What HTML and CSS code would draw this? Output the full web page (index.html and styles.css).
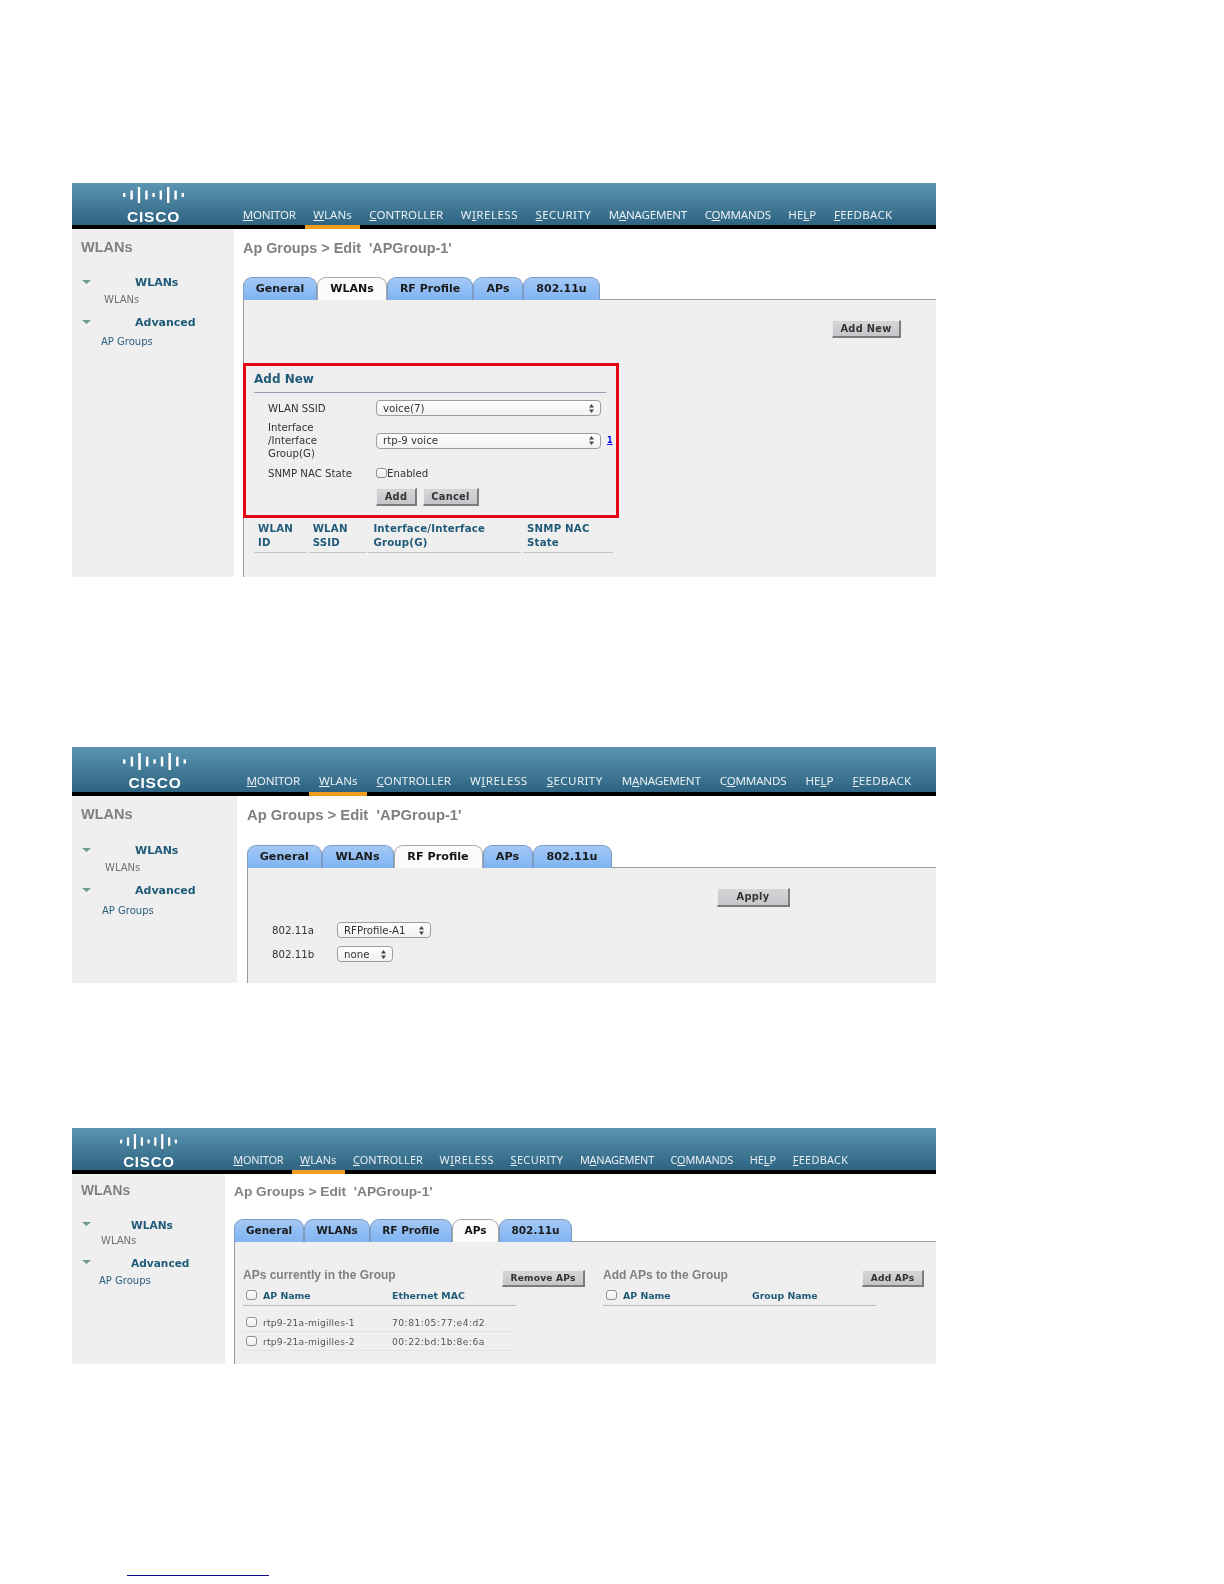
FILE: index.html
```
<!DOCTYPE html>
<html lang="en">
<head>
<meta charset="utf-8">
<title>AP Groups</title>
<link rel="stylesheet" href="styles.css">
</head>
<body>
<main class="page">

<section class="shot shot-a">
  <header class="bar">
    <div class="brand">
      <svg class="logo" viewBox="0 0 61 16" preserveAspectRatio="none"><g fill="#fff"><rect x="0" y="6" width="2.4" height="4"/><rect x="7.4" y="3.5" width="2.4" height="9"/><rect x="14.8" y="0" width="2.4" height="16"/><rect x="22.2" y="3.5" width="2.4" height="9"/><rect x="29.4" y="6" width="2.4" height="4"/><rect x="36.6" y="3.5" width="2.4" height="9"/><rect x="44" y="0" width="2.4" height="16"/><rect x="51.4" y="3.5" width="2.4" height="9"/><rect x="58.6" y="6" width="2.4" height="4"/></g></svg>
      <span class="cisco">CISCO</span>
    </div>
    <nav class="nav">
      <a><u>M</u>ONITOR</a><a class="on"><u>W</u>LANs</a><a><u>C</u>ONTROLLER</a><a>W<u>I</u>RELESS</a><a><u>S</u>ECURITY</a><a>M<u>A</u>NAGEMENT</a><a>C<u>O</u>MMANDS</a><a>HE<u>L</u>P</a><a><u>F</u>EEDBACK</a>
    </nav>
  </header>
  <div class="body">
    <aside class="side">
      <h2 class="side-title">WLANs</h2>
      <div class="side-head r1"><svg class="tri" viewBox="0 0 9 4"><polygon points="0,0 9,0 4.5,4"/></svg><b>WLANs</b></div>
      <div class="side-sub r2">WLANs</div>
      <div class="side-head r3"><svg class="tri" viewBox="0 0 9 4"><polygon points="0,0 9,0 4.5,4"/></svg><b>Advanced</b></div>
      <div class="side-link r4">AP Groups</div>
    </aside>
    <div class="main">
      <h1 class="title">Ap Groups &gt; Edit&nbsp; 'APGroup-1'</h1>
      <div class="tabs">
        <span class="tab t1">General</span><span class="tab t2 active">WLANs</span><span class="tab t3">RF Profile</span><span class="tab t4">APs</span><span class="tab t5">802.11u</span>
      </div>
      <div class="panel panel-a">
        <div class="addnew-row"><button class="btn btn-new">Add New</button></div>
        <div class="redbox">
          <h3 class="form-title">Add New</h3>
          <div class="form-grid">
            <span class="lab">WLAN SSID</span>
            <div class="sel sel-wide"><span>voice(7)</span><svg class="updown" viewBox="0 0 5 9"><path d="M2.5 0 5 3.4H0zM2.5 9 0 5.6h5z"/></svg></div>
            <span></span>
            <span class="lab">Interface<br>/Interface<br>Group(G)</span>
            <div class="sel sel-wide"><span>rtp-9 voice</span><svg class="updown" viewBox="0 0 5 9"><path d="M2.5 0 5 3.4H0zM2.5 9 0 5.6h5z"/></svg></div>
            <a class="foot">1</a>
            <span class="lab">SNMP NAC State</span>
            <label class="check-line"><input type="checkbox" class="cb"><span>Enabled</span></label>
            <span></span>
            <span></span>
            <div class="form-btns"><button class="btn btn-add">Add</button><button class="btn btn-cancel">Cancel</button></div>
          </div>
        </div>
        <div class="wtable">
          <div class="wth">WLAN<br>ID</div>
          <div class="wth">WLAN<br>SSID</div>
          <div class="wth">Interface/Interface<br>Group(G)</div>
          <div class="wth">SNMP NAC<br>State</div>
        </div>
      </div>
    </div>
  </div>
</section>

<section class="shot shot-b">
  <header class="bar">
    <div class="brand">
      <svg class="logo" viewBox="0 0 61 16" preserveAspectRatio="none"><g fill="#fff"><rect x="0" y="6" width="2.4" height="4"/><rect x="7.4" y="3.5" width="2.4" height="9"/><rect x="14.8" y="0" width="2.4" height="16"/><rect x="22.2" y="3.5" width="2.4" height="9"/><rect x="29.4" y="6" width="2.4" height="4"/><rect x="36.6" y="3.5" width="2.4" height="9"/><rect x="44" y="0" width="2.4" height="16"/><rect x="51.4" y="3.5" width="2.4" height="9"/><rect x="58.6" y="6" width="2.4" height="4"/></g></svg>
      <span class="cisco">CISCO</span>
    </div>
    <nav class="nav">
      <a><u>M</u>ONITOR</a><a class="on"><u>W</u>LANs</a><a><u>C</u>ONTROLLER</a><a>W<u>I</u>RELESS</a><a><u>S</u>ECURITY</a><a>M<u>A</u>NAGEMENT</a><a>C<u>O</u>MMANDS</a><a>HE<u>L</u>P</a><a><u>F</u>EEDBACK</a>
    </nav>
  </header>
  <div class="body">
    <aside class="side">
      <h2 class="side-title">WLANs</h2>
      <div class="side-head r1"><svg class="tri" viewBox="0 0 9 4"><polygon points="0,0 9,0 4.5,4"/></svg><b>WLANs</b></div>
      <div class="side-sub r2">WLANs</div>
      <div class="side-head r3"><svg class="tri" viewBox="0 0 9 4"><polygon points="0,0 9,0 4.5,4"/></svg><b>Advanced</b></div>
      <div class="side-link r4">AP Groups</div>
    </aside>
    <div class="main">
      <h1 class="title">Ap Groups &gt; Edit&nbsp; 'APGroup-1'</h1>
      <div class="tabs">
        <span class="tab t1">General</span><span class="tab t2">WLANs</span><span class="tab t3 active">RF Profile</span><span class="tab t4">APs</span><span class="tab t5">802.11u</span>
      </div>
      <div class="panel panel-b">
        <button class="btn btn-apply">Apply</button>
        <div class="rf-grid">
          <span class="lab">802.11a</span>
          <div class="sel sel-rf"><span>RFProfile-A1</span><svg class="updown" viewBox="0 0 5 9"><path d="M2.5 0 5 3.4H0zM2.5 9 0 5.6h5z"/></svg></div>
          <span class="lab">802.11b</span>
          <div class="sel sel-none"><span>none</span><svg class="updown" viewBox="0 0 5 9"><path d="M2.5 0 5 3.4H0zM2.5 9 0 5.6h5z"/></svg></div>
        </div>
      </div>
    </div>
  </div>
</section>

<section class="shot shot-c">
  <header class="bar">
    <div class="brand">
      <svg class="logo" viewBox="0 0 61 16" preserveAspectRatio="none"><g fill="#fff"><rect x="0" y="6" width="2.4" height="4"/><rect x="7.4" y="3.5" width="2.4" height="9"/><rect x="14.8" y="0" width="2.4" height="16"/><rect x="22.2" y="3.5" width="2.4" height="9"/><rect x="29.4" y="6" width="2.4" height="4"/><rect x="36.6" y="3.5" width="2.4" height="9"/><rect x="44" y="0" width="2.4" height="16"/><rect x="51.4" y="3.5" width="2.4" height="9"/><rect x="58.6" y="6" width="2.4" height="4"/></g></svg>
      <span class="cisco">CISCO</span>
    </div>
    <nav class="nav">
      <a><u>M</u>ONITOR</a><a class="on"><u>W</u>LANs</a><a><u>C</u>ONTROLLER</a><a>W<u>I</u>RELESS</a><a><u>S</u>ECURITY</a><a>M<u>A</u>NAGEMENT</a><a>C<u>O</u>MMANDS</a><a>HE<u>L</u>P</a><a><u>F</u>EEDBACK</a>
    </nav>
  </header>
  <div class="body">
    <aside class="side">
      <h2 class="side-title">WLANs</h2>
      <div class="side-head r1"><svg class="tri" viewBox="0 0 9 4"><polygon points="0,0 9,0 4.5,4"/></svg><b>WLANs</b></div>
      <div class="side-sub r2">WLANs</div>
      <div class="side-head r3"><svg class="tri" viewBox="0 0 9 4"><polygon points="0,0 9,0 4.5,4"/></svg><b>Advanced</b></div>
      <div class="side-link r4">AP Groups</div>
    </aside>
    <div class="main">
      <h1 class="title">Ap Groups &gt; Edit&nbsp; 'APGroup-1'</h1>
      <div class="tabs">
        <span class="tab t1">General</span><span class="tab t2">WLANs</span><span class="tab t3">RF Profile</span><span class="tab t4 active">APs</span><span class="tab t5">802.11u</span>
      </div>
      <div class="panel panel-c">
        <div class="ap-col ap-left">
          <div class="ap-head"><span class="ap-title">APs currently in the Group</span><button class="btn btn-remove">Remove APs</button></div>
          <div class="ap-row ap-th"><input type="checkbox" class="cb"><span>AP Name</span><span>Ethernet MAC</span></div>
          <div class="ap-row ap-td first"><input type="checkbox" class="cb"><span>rtp9-21a-migilles-1</span><span class="mac">70:81:05:77:e4:d2</span></div>
          <div class="ap-row ap-td"><input type="checkbox" class="cb"><span>rtp9-21a-migilles-2</span><span class="mac">00:22:bd:1b:8e:6a</span></div>
        </div>
        <div class="ap-col ap-right">
          <div class="ap-head"><span class="ap-title">Add APs to the Group</span><button class="btn btn-addaps">Add APs</button></div>
          <div class="ap-row ap-th"><input type="checkbox" class="cb"><span>AP Name</span><span>Group Name</span></div>
        </div>
      </div>
    </div>
  </div>
</section>

<div class="footer-line"></div>
</main>
</body>
</html>
```
FILE: styles.css
```
* { box-sizing: border-box; }
html, body { margin: 0; padding: 0; background: #fff; }
body { height: 1584px; overflow: hidden; font-family: "DejaVu Sans", sans-serif; color: #333; }
.page { padding-top: 183px; }

.shot {
  width: 864px;
  margin-left: 72px;
  display: flex;
  flex-direction: column;
  filter: blur(0.4px);
}
.shot-a { height: 394px; --side: 162px; --bar: 46px; --pad: 9px; --nav: 11.5px; --navpad: 8.8px; --navbottom: 3px; --logow: 61px; --logoh: 16px; --logotop: 4px; --logogap: 8px; --cisco: 15.5px;
  --sidetop: 9px; --sidetitle: 14.5px; --sidehead: 11px; --g1: 19px; --g2: 1px; --g3: 7px; --g4: 3px; --head: 44px; --sub: 32px; --link: 29px;
  --title: 14.4px; --titletop: 9px; --tabsgap: 19px; --tab: 11px; }
.shot-b { height: 236px; margin-top: 170px; --side: 165px; --bar: 49px; --pad: 10px; --nav: 11.6px; --navpad: 9.5px; --navbottom: 4px; --logow: 63px; --logoh: 17px; --logotop: 6px; --logogap: 7px; --cisco: 15.5px;
  --sidetop: 9px; --sidetitle: 14.5px; --sidehead: 11px; --g1: 20px; --g2: 1px; --g3: 7px; --g4: 4px; --head: 44px; --sub: 33px; --link: 30px;
  --title: 14.8px; --titletop: 9px; --tabsgap: 20px; --tab: 11.2px; }
.shot-c { height: 236px; margin-top: 145px; --side: 153px; --bar: 46px; --pad: 9px; --nav: 10.9px; --navpad: 8.3px; --navbottom: 3px; --logow: 57px; --logoh: 15px; --logotop: 6px; --logogap: 7px; --cisco: 15px;
  --sidetop: 8px; --sidetitle: 13.8px; --sidehead: 10.6px; --g1: 17px; --g2: 0px; --g3: 6px; --g4: 2px; --head: 40px; --sub: 29px; --link: 27px;
  --title: 13.7px; --titletop: 8px; --tabsgap: 17px; --tab: 10.5px; }

/* top bar */
.bar {
  flex: none;
  height: var(--bar);
  display: flex;
  background: linear-gradient(#5a94b0, #2e6481);
  border-bottom: 4px solid #000;
}
.brand {
  flex: none;
  width: var(--side);
  display: flex;
  flex-direction: column;
  align-items: center;
  padding-top: var(--logotop);
}
.logo { display: block; width: var(--logow); height: var(--logoh); }
.cisco {
  margin-top: var(--logogap);
  padding-left: 1px;
  font: bold var(--cisco)/11px "Liberation Sans", sans-serif;
  letter-spacing: .8px;
  color: #fff;
}
.nav { display: flex; align-items: flex-end; font-family: "Noto Sans", sans-serif; font-size: var(--nav); line-height: 14px; }
.nav a { padding: 0 var(--navpad) var(--navbottom); color: #e9eff3; white-space: nowrap; position: relative; }
.nav a:nth-child(1) { letter-spacing: -.2px; }
.nav a:nth-child(3) { letter-spacing: .1px; }
.nav a:nth-child(4) { letter-spacing: .5px; }
.nav a:nth-child(5) { letter-spacing: .4px; }
.nav a:nth-child(6) { letter-spacing: -.2px; }
.nav a:nth-child(7) { letter-spacing: -.2px; }
.nav a:nth-child(9) { letter-spacing: .3px; }
.nav a.on::after { content: ""; position: absolute; left: 0; right: 0; bottom: -4px; height: 4px; background: #ef9d1f; }

/* body */
.body { flex: 1; display: flex; min-height: 0; }
.side { flex: none; width: var(--side); background: #efefef; padding-top: var(--sidetop); }
.side-title { margin: 0 0 0 9px; font: bold var(--sidetitle)/18px "Liberation Sans", sans-serif; color: #808080; }
.side-head { display: flex; align-items: center; padding-left: 10px; height: 16px; font-size: var(--sidehead); line-height: 16px; color: #1f5a78; }
.side-head b { margin-left: var(--head); }
.tri { width: 9px; height: 4px; fill: #6f9a90; margin-top: -2px; }
.side-sub { padding-left: var(--sub); height: 16px; font-size: 10px; line-height: 16px; color: #707070; }
.side-link { padding-left: var(--link); height: 16px; font-size: 10px; line-height: 16px; color: #2c6080; }
.r1 { margin-top: var(--g1); }
.r2 { margin-top: var(--g2); }
.r3 { margin-top: var(--g3); }
.r4 { margin-top: var(--g4); }

.main { flex: 1; min-width: 0; padding: var(--titletop) 0 0 var(--pad); display: flex; flex-direction: column; }
.title { margin: 0; font: bold var(--title)/20px "Liberation Sans", sans-serif; color: #808080; white-space: nowrap; }

.tabs { flex: none; display: flex; height: 23px; margin-top: var(--tabsgap); position: relative; z-index: 1; margin-bottom: -1px; }
.tab {
  display: block;
  height: 23px;
  font-size: var(--tab);
  font-weight: bold;
  line-height: 21px;
  text-align: center;
  color: #1b1b1b;
  background: linear-gradient(#a3c8f5, #80b4f3);
  border: 1px solid #7e9cc0;
  border-bottom: 0;
  border-radius: 9px 9px 0 0;
}
.tab.active { background: #fbfbfb; border: 1px solid #a5a5a5; border-bottom: 0; color: #111; }
.shot-a .t1 { width: 74px; } .shot-a .t2 { width: 70px; } .shot-a .t3 { width: 86px; } .shot-a .t4 { width: 50px; } .shot-a .t5 { width: 77px; }
.shot-b .t1 { width: 74.5px; } .shot-b .t2 { width: 72px; } .shot-b .t3 { width: 89px; } .shot-b .t4 { width: 50px; } .shot-b .t5 { width: 79px; }
.shot-c .t1 { width: 70px; } .shot-c .t2 { width: 66px; } .shot-c .t3 { width: 82px; } .shot-c .t4 { width: 47px; } .shot-c .t5 { width: 73px; }

.panel { flex: 1; background: #efefef; border-top: 1px solid #999; border-left: 1px solid #999; min-height: 0; }

.btn {
  display: block;
  padding: 0;
  height: 18px;
  font: bold 9.8px/14px "DejaVu Sans", sans-serif;
  letter-spacing: .3px;
  color: #333;
  background: linear-gradient(#d6d6d9, #c6c6ca);
  border: 1px solid;
  border-color: #ededed #7c7c7c #7c7c7c #ededed;
  border-width: 1px 2px 2px 1px;
}

/* shot a */
.addnew-row { display: flex; justify-content: flex-end; padding: 20px 35px 0 0; }
.btn-new { width: 69px; }
.redbox { width: 376px; height: 155px; margin: 25px 0 0 -1px; border: 3px solid #e30613; padding: 5px 0 0 8px; }
.form-title { margin: 0; width: 352px; height: 22px; font-size: 12px; font-weight: bold; line-height: 16px; color: #1f5a78; border-bottom: 1px solid #9a9ab0; }
.form-grid { margin-top: 7px; padding-left: 14px; display: grid; grid-template-columns: 108px 225px auto; grid-template-rows: 16px 39px 16px 20px; row-gap: 5px; align-items: center; }
.lab { font-size: 10.2px; line-height: 13px; color: #333; }
.sel {
  height: 16px;
  display: flex;
  align-items: center;
  justify-content: space-between;
  padding: 0 6px;
  font-size: 10.2px;
  color: #333;
  background: linear-gradient(#fff, #f1f1f1);
  border: 1px solid #9d9d9d;
  border-radius: 4px;
}
.updown { flex: none; width: 5px; height: 9px; fill: #444; }
.foot { font-size: 8px; font-weight: bold; color: #0000ee; text-decoration: underline; margin-left: 6px; }
.check-line { display: flex; align-items: center; font-size: 10.2px; color: #333; }
.cb { appearance: none; -webkit-appearance: none; display: block; margin: 0; flex: none; width: 11px; height: 10px; background: linear-gradient(#fff, #eee); border: 1px solid #8f8f8f; border-radius: 3px; }
.form-btns { display: flex; gap: 6px; align-self: end; }
.btn-add { width: 41px; }
.btn-cancel { width: 56px; }
.wtable { margin: 4px 0 0 10px; width: 359px; display: grid; grid-template-columns: 53px 58px 153px 90px; column-gap: 1.7px; }
.wth { height: 31px; padding-left: 4px; font-size: 10.2px; font-weight: bold; line-height: 14px; letter-spacing: .2px; color: #1f5a78; border-bottom: 1px solid #c4c4c4; white-space: nowrap; }
.wth:nth-child(3) { padding-left: 5px; }

/* shot b */
.panel-b { padding: 20px 0 0 24px; }
.btn-apply { width: 73px; height: 19px; margin-left: 445px; }
.rf-grid { margin-top: 15px; display: grid; grid-template-columns: 65px max-content; grid-auto-rows: 16px; row-gap: 8px; align-items: center; justify-items: start; }
.sel-rf { width: 94px; }
.sel-none { width: 56px; }

/* shot c */
.panel-c { display: flex; gap: 18px; padding: 26px 0 0 8px; }
.ap-left { width: 342px; }
.ap-right { width: 321px; }
.ap-head { display: flex; justify-content: space-between; align-items: flex-start; height: 19px; }
.ap-title { font: bold 12px/14px "Liberation Sans", sans-serif; color: #808080; white-space: nowrap; }
.ap-head .btn { margin-top: 2px; height: 17px; font-size: 9.1px; letter-spacing: .2px; }
.btn-remove { width: 83px; }
.btn-addaps { width: 62px; }
.ap-row { width: 273px; display: grid; grid-template-columns: 17px 129px 1fr; align-items: center; height: 19px; padding-left: 3px; border-bottom: 1px solid #e3e3e3; }
.ap-th { font-size: 9.4px; font-weight: bold; color: #1f5a78; border-bottom-color: #bcbcbc; white-space: nowrap; padding-bottom: 2px; }
.ap-td { font-size: 9.2px; color: #555; letter-spacing: .22px; white-space: nowrap; }
.ap-td .mac { letter-spacing: .45px; }
.ap-td.first { margin-top: 7px; }

.footer-line { width: 142px; height: 1.4px; margin: 211px 0 0 127px; background: #0a0a8c; }
```
